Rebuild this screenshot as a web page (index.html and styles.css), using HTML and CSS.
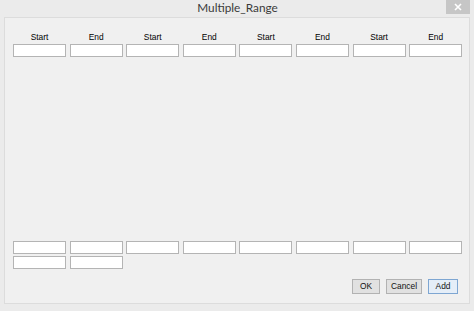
FILE: index.html
```html
<!DOCTYPE html>
<html>
<head>
<meta charset="utf-8">
<link rel="stylesheet" href="styles.css">
</head>
<body>
<div class="window">
  <div class="titlebar">
    <span></span>
    <span class="title">Multiple_Range</span>
    <span class="close"><svg width="8" height="8" viewBox="0 0 8 8"><path d="M1 1L7 7M7 1L1 7" stroke="#fff" stroke-width="1.6"/></svg></span>
  </div>
  <div class="client">
    <div class="grid labels">
      <span>Start</span><span>End</span><span>Start</span><span>End</span>
      <span>Start</span><span>End</span><span>Start</span><span>End</span>
    </div>
    <div class="grid top-inputs">
      <input class="field"><input class="field"><input class="field"><input class="field">
      <input class="field"><input class="field"><input class="field"><input class="field">
    </div>
    <div class="spacer"></div>
    <div class="grid bottom-inputs">
      <input class="field"><input class="field"><input class="field"><input class="field">
      <input class="field"><input class="field"><input class="field"><input class="field">
      <input class="field"><input class="field">
    </div>
    <div class="buttons">
      <button class="btn ok">OK</button>
      <button class="btn cancel">Cancel</button>
      <button class="btn add">Add</button>
    </div>
  </div>
</div>
</body>
</html>
```
FILE: styles.css
```css
html, body {
  margin: 0;
  padding: 0;
}
body {
  width: 474px;
  height: 311px;
  background: #ebebeb;
  font-family: "Liberation Sans", Arial, sans-serif;
  overflow: hidden;
}
.window {
  width: 474px;
  height: 311px;
  display: flex;
  flex-direction: column;
}
.titlebar {
  height: 17px;
  display: grid;
  grid-template-columns: 1fr auto 1fr;
  align-items: start;
}
.title {
  font-family: Lato, "Noto Sans", sans-serif;
  font-size: 11.8px;
  line-height: 16px;
  color: #3a3a3a;
  padding-left: 1px;
}
.close {
  justify-self: end;
  margin-right: 4px;
  width: 24px;
  height: 14px;
  background: #c6c6c6;
  display: flex;
  align-items: center;
  justify-content: center;
}
.close svg { display: block; }
.client {
  margin: 0 4px 0 4px;
  height: 287px;
  box-sizing: border-box;
  border: 1px solid #dcdcdc;
  background: #f0f0f0;
  padding: 14px 10px 9px 8px;
  display: flex;
  flex-direction: column;
}
.grid {
  display: grid;
  grid-template-columns: repeat(8, 53px);
  column-gap: 3.6px;
}
.labels span {
  font-size: 8.4px;
  line-height: 10px;
  color: #000;
  text-align: center;
}
.top-inputs {
  margin-top: 2px;
}
.field {
  box-sizing: border-box;
  width: 53px;
  height: 13px;
  margin: 0;
  padding: 0;
  border: 1px solid #b4b4b4;
  background: #fff;
  display: block;
}
.spacer {
  flex: 1;
}
.bottom-inputs {
  row-gap: 2px;
}
.buttons {
  margin-top: 10px;
  display: flex;
  justify-content: flex-end;
  gap: 6px;
  padding-right: 1px;
}
.btn {
  box-sizing: border-box;
  height: 15px;
  margin: 0;
  padding: 0;
  font-family: "Liberation Sans", Arial, sans-serif;
  font-size: 8.4px;
  line-height: 13px;
  color: #111;
  background: #e1e1e1;
  border: 1px solid #b2b2b2;
}
.ok { width: 28px; }
.cancel { width: 36px; }
.add {
  width: 30px;
  background: #e5eef8;
  border-color: #7ea6d2;
}
```
